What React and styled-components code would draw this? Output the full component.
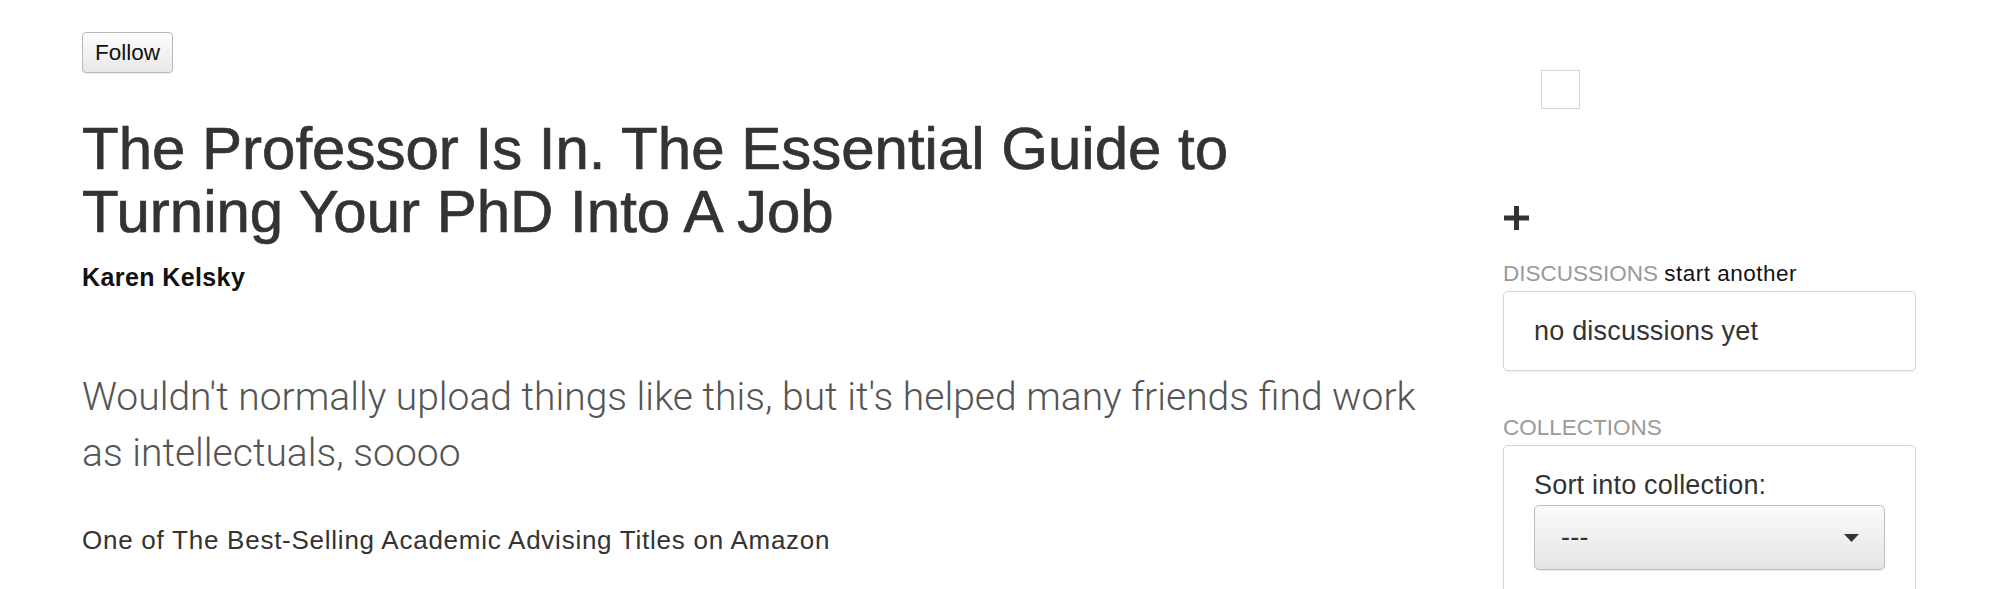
import styled, { createGlobalStyle } from "styled-components";

const Global = createGlobalStyle`
    body{
        margin: 0;
        background: #fff;
        font-family: "Liberation Sans", Helvetica, Arial, sans-serif;
        color: #333;
    }
`

const Pagina = styled.div`
    display: flex;
    gap: 70px;
    padding: 0 82px;
`

const Principal = styled.main`
    flex: 1;
    min-width: 0;
`

const BotaoSeguir = styled.button`
    margin-top: 32px;
    height: 41px;
    padding: 0 12px;
    font-family: "Liberation Sans", Helvetica, Arial, sans-serif;
    font-size: 22.5px;
    color: #111;
    background: linear-gradient(#fefefe, #e8e8e8);
    border: 1px solid #b9b9b9;
    border-radius: 4px;
    box-shadow: 0 1px 1px rgba(0, 0, 0, 0.08);
    cursor: pointer;
`

const Titulo = styled.h1`
    margin: 44px 0 0;
    font-size: 60px;
    line-height: 63px;
    font-weight: 400;
    color: #333;
    -webkit-text-stroke: 0.7px #333;
`

const Autor = styled.div`
    margin-top: 19px;
    font-size: 25px;
    line-height: 30px;
    font-weight: 700;
    letter-spacing: 0.4px;
    color: #111;
`

const Descricao = styled.p`
    margin: 77px 0 0;
    font-family: Roboto, "Liberation Sans", sans-serif;
    font-weight: 300;
    font-size: 39px;
    line-height: 56px;
    color: #555;
`

const Texto = styled.p`
    margin: ${(p) => p.$topo}px 0 0;
    font-size: 26px;
    line-height: 36px;
    letter-spacing: 0.75px;
    color: #333;
`

const Lateral = styled.aside`
    width: 413px;
    flex-shrink: 0;
    display: flex;
    flex-direction: column;
    align-items: flex-start;
`

const Miniatura = styled.div`
    margin: 70px 0 0 38px;
    width: 37px;
    height: 37px;
    border: 1px solid #d6d6d6;
`

const Mais = styled.svg`
    margin: 97px 0 0 1px;
    display: block;
`

const Rotulo = styled.div`
    margin-top: ${(p) => p.$topo}px;
    font-size: 22.5px;
    line-height: 28px;
    color: #9a9a9a;
    span{
        color: #111;
        letter-spacing: 0.5px;
    }
`

const Caixa = styled.div`
    box-sizing: border-box;
    width: 100%;
    margin-top: 3px;
    border: 1px solid #d5d5d5;
    border-radius: 5px;
    box-shadow: 0 1px 2px rgba(0, 0, 0, 0.07);
    padding: ${(p) => p.$padding};
    display: flex;
    flex-direction: column;
    justify-content: ${(p) => (p.$centro ? "center" : "flex-start")};
    min-height: ${(p) => p.$altura}px;
    font-size: 27px;
    line-height: 31px;
    letter-spacing: 0.2px;
    color: #333;
`

const Selecao = styled.div`
    box-sizing: border-box;
    margin-top: 4px;
    width: 351px;
    height: 65px;
    padding: 0 25px 0 26px;
    display: flex;
    align-items: center;
    justify-content: space-between;
    border: 1px solid #bdbdbd;
    border-radius: 5px;
    background: linear-gradient(#fafafa, #e5e5e5);
    box-shadow: 0 1px 1px rgba(0, 0, 0, 0.08);
    font-size: 27px;
    color: #333;
`

const App = () => {
    return (
        <>
            <Global />
            <Pagina>
                <Principal>
                    <BotaoSeguir>Follow</BotaoSeguir>
                    <Titulo>The Professor Is In. The Essential Guide to Turning Your PhD Into A Job</Titulo>
                    <Autor>Karen Kelsky</Autor>
                    <Descricao>
                        Wouldn't normally upload things like this, but it's helped many friends find work as intellectuals, soooo
                    </Descricao>
                    <Texto $topo={41}>One of The Best-Selling Academic Advising Titles on Amazon</Texto>
                    <Texto $topo={34}>shelf life</Texto>
                </Principal>
                <Lateral>
                    <Miniatura />
                    <Mais width="25" height="24" viewBox="0 0 25 24">
                        <rect x="10" y="0" width="5" height="24" fill="#333" />
                        <rect x="0" y="9.5" width="25" height="5" fill="#333" />
                    </Mais>
                    <Rotulo $topo={30}>
                        DISCUSSIONS <span>start another</span>
                    </Rotulo>
                    <Caixa $centro $altura={80} $padding="0 30px">
                        no discussions yet
                    </Caixa>
                    <Rotulo $topo={43}>COLLECTIONS</Rotulo>
                    <Caixa $altura={200} $padding="24px 30px 40px">
                        Sort into collection:
                        <Selecao>
                            ---
                            <svg width="15" height="8" viewBox="0 0 15 8">
                                <path d="M0 0 H15 L7.5 8 Z" fill="#333" />
                            </svg>
                        </Selecao>
                    </Caixa>
                </Lateral>
            </Pagina>
        </>
    )
}

export default App;
